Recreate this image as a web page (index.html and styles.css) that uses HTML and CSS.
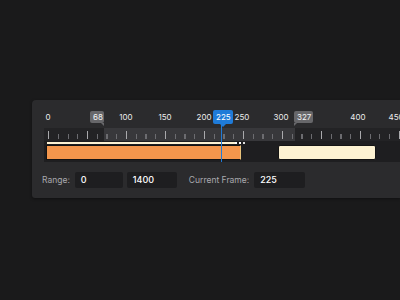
FILE: index.html
```html
<!DOCTYPE html>
<html lang="en">
  <head>
    <meta charset="UTF-8" />
    <title>Timeline</title>
    <link rel="stylesheet" href="styles.css">
  </head>
  <body>
    <div class="panel">
      <div class="scale">
        <span class="scale__label" style="left: 16px">0</span>
        <span class="scale__label" style="left: 94px">100</span>
        <span class="scale__label" style="left: 133px">150</span>
        <span class="scale__label" style="left: 172px">200</span>
        <span class="scale__label" style="left: 210px">250</span>
        <span class="scale__label" style="left: 249px">300</span>
        <span class="scale__label" style="left: 326px">400</span>
        <span class="scale__label" style="left: 364px">450</span>

        <span class="badge badge--start">68</span>
        <span class="badge badge--current">225</span>
        <span class="badge badge--end">327</span>
      </div>

      <div class="ruler">
        <div class="ruler__range"></div>
        <div class="ruler__ticks"></div>
      </div>

      <div class="track">
        <div class="track__line"></div>
        <div class="track__clip track__clip--orange"></div>
        <div class="track__handle"></div>
        <div class="track__clip track__clip--cream"></div>
      </div>

      <div class="playhead"></div>

      <div class="controls">
        <label class="controls__label">Range:</label>
        <span class="field field--from">0</span>
        <span class="field field--to">1400</span>
        <label class="controls__label ml-l">Current Frame:</label>
        <span class="field field--frame">225</span>
      </div>
    </div>
  </body>
</html>
```

FILE: styles.css
```css
:root {
  --color-page: #1a1a1b;
  --color-panel: #2b2b2d;
  --color-dark: #1e1e20;
  --color-range: #38383b;
  --color-blue: #1f7bd8;
  --color-orange: #f4964c;
  --color-cream: #fdf2d2;
}
body {
  margin: 0;
  width: 400px;
  height: 300px;
  overflow: hidden;
  background: var(--color-page);
  font-family: Inter, "Helvetica Neue", Arial, sans-serif;
  font-size: 8px;
  color: #f2f2f2;
}

.panel {
  position: relative;
  margin: 100px 0 0 32px;
  width: 368px;
  height: 98px;
  overflow: hidden;
  background: var(--color-panel);
  border-top-left-radius: 4px;
  border-bottom-left-radius: 3px;
  box-shadow: 0 1px 3px rgba(0, 0, 0, 0.4);
}

.scale {
  position: relative;
  height: 28px;
}
.scale__label {
  position: absolute;
  top: 12px;
  line-height: 10px;
  transform: translateX(-50%);
  color: #ececec;
}

.badge {
  position: absolute;
  height: 12px;
  line-height: 12px;
  padding: 0 3px;
  border-radius: 2px;
  background: #67676a;
  color: #f4f4f4;
  text-align: center;
}
.badge::after {
  content: "";
  position: absolute;
  bottom: -3px;
  border-top: 3px solid #67676a;
}
.badge--start {
  left: 58px;
  top: 11px;
  width: 8px;
}
.badge--start::after {
  right: 0;
  border-left: 3px solid transparent;
}
.badge--end {
  left: 262px;
  top: 11px;
  width: 13px;
}
.badge--end::after {
  left: 0;
  border-right: 3px solid transparent;
}
.badge--current {
  left: 181px;
  top: 10px;
  height: 14px;
  line-height: 14px;
  width: 14px;
  background: var(--color-blue);
  color: #fff;
}
.badge--current::after {
  left: 7px;
  border-top-color: var(--color-blue);
  border-left: 3px solid transparent;
  border-right: 3px solid transparent;
}

.ruler {
  position: relative;
  height: 13px;
  margin-left: 12px;
  background: #232325;
}
.ruler__range {
  position: absolute;
  top: 0;
  bottom: 0;
  left: 60px;
  width: 191px;
  background: var(--color-range);
}
.ruler__ticks {
  position: absolute;
  left: 4px;
  right: 0;
  top: 3px;
  bottom: 2px;
  background:
    repeating-linear-gradient(90deg, #a9a9ac 0 1px, transparent 1px 39px) 0 0 / 100% 100% no-repeat,
    repeating-linear-gradient(90deg, #6c6c70 0 1px, transparent 1px 9.75px) 0 3px / 100% 5px no-repeat;
}

.track {
  position: relative;
  height: 21px;
  margin-left: 12px;
  background: var(--color-dark);
}
.track__line {
  position: absolute;
  left: 3px;
  top: 1px;
  width: 190px;
  height: 2px;
  background: var(--color-cream);
}
.track__handle {
  position: absolute;
  left: 191px;
  top: 1px;
  width: 11px;
  height: 2px;
  background:
    linear-gradient(90deg, #fff 0 2px, transparent 2px 4px, #fff 4px 6px, transparent 6px 8px, #ddd 8px 10px, transparent 10px);
}
.track__clip {
  position: absolute;
  top: 4px;
  height: 13px;
  border: 1px solid #141414;
}
.track__clip--orange {
  left: 2px;
  width: 193px;
  background: var(--color-orange);
  border-right-color: #e9c27a;
}
.track__clip--cream {
  left: 234px;
  width: 96px;
  background: var(--color-cream);
  border-radius: 2px;
}

.playhead {
  position: absolute;
  left: 189px;
  top: 24px;
  width: 1px;
  height: 38px;
  background: var(--color-blue);
}

.controls {
  display: flex;
  align-items: center;
  gap: 4px;
  padding: 10px 0 0 10px;
  font-size: 9px;
}
.controls__label {
  color: #a9a9ad;
  font-size: 8.5px;
  margin-right: 1px;
}
.field {
  box-sizing: border-box;
  height: 16px;
  line-height: 16px;
  padding-left: 6px;
  background: var(--color-dark);
  border-radius: 2px;
  color: #fff;
  font-weight: 500;
}
.field--from {
  width: 48px;
}
.field--to {
  width: 50px;
}
.field--frame {
  width: 51px;
}
.ml-l {
  margin-left: 8px;
}
```
